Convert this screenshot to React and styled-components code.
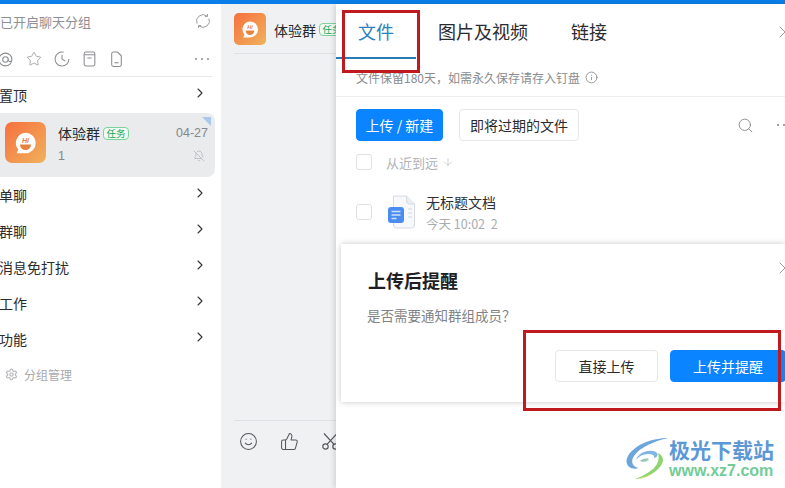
import React from 'react';
import styled, { createGlobalStyle } from 'styled-components';
import { ChevronRight, Star, Search, Info, ArrowDown, Smile, ThumbsUp, X, BellOff, Settings } from 'lucide-react';

const Global = createGlobalStyle`
  html, body { margin: 0; padding: 0; height: 100%; background: #fff; overflow: hidden; }
  * { box-sizing: border-box; }
  body { font-family: "Noto Sans CJK SC", "Noto Sans", sans-serif; color: #222; }
`;

const Page = styled.div`
  position: relative;
  width: 785px;
  height: 488px;
  overflow: hidden;
  display: flex;
  flex-direction: column;
`;
const TopBar = styled.div`
  height: 4px;
  flex: none;
  background: #0a7ee8;
`;
const Body = styled.div`
  flex: 1;
  display: flex;
  min-height: 0;
`;

/* left column */
const Sidebar = styled.aside`
  width: 221px;
  flex: none;
  background: #fff;
  display: flex;
  flex-direction: column;
`;
const SearchRow = styled.div`
  height: 36px;
  padding: 0 10px 2px 0;
  display: flex;
  align-items: center;
  justify-content: space-between;
  font-size: 13px;
  color: #8d8f94;
`;
const ToolRow = styled.div`
  height: 37px;
  margin-right: 9px;
  display: flex;
  align-items: center;
  border-bottom: 1px solid #e7e8ea;
  padding-top: 2px;
  gap: 12px;
  color: #8b8d91;
  svg { flex: none; }
`;
const Dots = styled.span`
  margin-left: auto;
  display: flex;
  gap: 4px;
  margin-right: 3px;
  i { width: 2px; height: 2px; border-radius: 50%; background: ${p => p.$color || '#8b8d91'}; }
`;
const Group = styled.div`
  height: 36px;
  padding: 0 14px 1px 0;
  display: flex;
  align-items: center;
  justify-content: space-between;
  font-size: 14px;
  color: #2a2b2e;
  span { margin-left: -1px; }
  svg { margin-top: -3px; margin-right: -1px; color: #333; }
`;
const ChatCard = styled.div`
  position: relative;
  width: 215px;
  height: 64px;
  border-radius: 0 8px 8px 0;
  background: #e9ebed;
  padding: 9px 7px 0 5px;
  display: flex;
  gap: 12px;
  overflow: hidden;
`;
const Corner = styled.div`
  position: absolute;
  top: 4px;
  right: 4px;
  width: 0;
  height: 0;
  border-top: 9px solid #a9c8ea;
  border-left: 9px solid transparent;
`;
const CardMain = styled.div`
  flex: 1;
  display: flex;
  flex-direction: column;
`;
const CardLine = styled.div`
  display: flex;
  align-items: center;
  height: ${p => p.$h}px;
`;
const Name = styled.span`
  font-size: 14px;
  color: #26282b;
  white-space: nowrap;
`;
const Tag = styled.span`
  flex: none;
  margin-left: 3px;
  height: 13px;
  width: 26px;
  border: 1px solid #7dd3a0;
  background: #eefaf2;
  border-radius: 4px;
  color: #22a45a;
  font-size: 9.5px;
  line-height: 11px;
  text-align: center;
`;
const Time = styled.span`
  margin-left: auto;
  font-family: "Liberation Sans", sans-serif;
  font-size: 12.5px;
  color: #85878b;
`;
const Count = styled.span`
  font-family: "Liberation Sans", sans-serif;
  font-size: 12.5px;
  color: #85878b;
`;
const Manage = styled.div`
  height: 34px;
  padding-left: 5px;
  display: flex;
  align-items: center;
  gap: 6px;
  font-size: 12px;
  color: #a8aaad;
`;

/* middle column */
const Chat = styled.section`
  width: 115px;
  flex: none;
  background: #f0f1f3;
  display: flex;
  flex-direction: column;
  overflow: hidden;
  padding-left: 13px;
`;
const ChatHead = styled.header`
  height: 50px;
  flex: none;
  padding-top: 9px;
  border-bottom: 1px solid #dfe1e4;
  display: flex;
  gap: 8px;
  white-space: nowrap;
`;
const ChatHeadTitle = styled.div`
  height: 33px;
  display: flex;
  align-items: center;
`;
const ChatGap = styled.div`
  flex: 1;
`;
const ChatTools = styled.div`
  height: 68px;
  flex: none;
  border-top: 1px solid #dfe1e4;
  padding: 11px 0 0 5px;
  display: flex;
  gap: 22px;
  color: #55575b;
  svg { flex: none; }
`;

/* right column */
const Panel = styled.section`
  flex: 1;
  min-width: 0;
  background: #fff;
  box-shadow: -2px 0 5px rgba(0, 0, 0, 0.12);
  position: relative;
  display: flex;
  flex-direction: column;
`;
const Tabs = styled.nav`
  height: 55px;
  flex: none;
  display: flex;
  position: relative;
`;
const Tab = styled.div`
  width: ${p => p.$w}px;
  height: 55px;
  text-align: center;
  font-size: 18px;
  line-height: 55px;
  color: ${p => (p.$active ? '#2b82bd' : '#2b2c2f')};
  border-bottom: 2px solid ${p => (p.$active ? '#2a7ab5' : 'transparent')};
`;
const CloseSlot = styled.div`
  position: absolute;
  right: -10px;
  top: ${p => p.$top}px;
  height: 20px;
  color: #8e9094;
`;
const Notice = styled.div`
  height: 38px;
  flex: none;
  padding-left: 20px;
  display: flex;
  align-items: center;
  gap: 5px;
  font-size: 12px;
  color: #8a8c90;
  border-bottom: 1px solid #eeeff1;
`;
const Actions = styled.div`
  height: 45px;
  flex: none;
  padding: 12px 0 0 20px;
  display: flex;
  gap: 16px;
`;
const Btn = styled.button`
  height: 32px;
  width: ${p => p.$w}px;
  flex: none;
  padding: 0;
  border-radius: 4px;
  font-family: inherit;
  font-size: 14px;
  border: 1px solid ${p => (p.$primary ? '#0a84ff' : '#e6e7e9')};
  background: ${p => (p.$primary ? '#0a84ff' : '#fff')};
  color: ${p => (p.$primary ? '#fff' : '#2a2b2e')};
`;
const ActionIcons = styled.div`
  margin-left: auto;
  margin-right: -9px;
  height: 32px;
  display: flex;
  align-items: center;
  gap: 23px;
  color: #7f8185;
`;
const Row = styled.div`
  padding-left: 20px;
  display: flex;
  align-items: center;
  height: ${p => p.$h}px;
  flex: none;
`;
const Check = styled.span`
  width: 16px;
  height: 16px;
  flex: none;
  border: 1px solid #e0e1e3;
  border-radius: 3px;
  background: #fff;
`;
const SortLabel = styled.span`
  margin-left: 14px;
  font-size: 13px;
  color: #b0b2b5;
  display: flex;
  align-items: center;
  gap: 4px;
`;
const FileMeta = styled.div`
  margin-left: 10px;
  display: flex;
  flex-direction: column;
  gap: 4px;
  margin-top: 2px;
`;
const FileName = styled.div`
  font-size: 14px;
  line-height: 17px;
  color: #2e2f32;
`;
const FileDate = styled.div`
  font-size: 12.5px;
  line-height: 17px;
  color: #a9abae;
`;
const DocSlot = styled.span`
  margin-left: 16px;
  display: flex;
`;

/* overlays */
const Dialog = styled.div`
  position: absolute;
  left: 5px;
  top: 240px;
  width: 444px;
  height: 158px;
  background: #fff;
  box-shadow: 0 0 6px rgba(0, 0, 0, 0.22);
  padding: 24px 0 0 27px;
`;
const DialogTitle = styled.h2`
  margin: 0;
  font-size: 18px;
  line-height: 24px;
  font-weight: 700;
  color: #1f2023;
`;
const DialogText = styled.p`
  margin: 13px 0 0 -1px;
  font-size: 13.5px;
  line-height: 20px;
  color: #818386;
`;
const DialogButtons = styled.div`
  margin: 25px 0 0 187px;
  display: flex;
  gap: 12px;
`;
const RedBox = styled.div`
  position: absolute;
  left: ${p => p.$x}px;
  top: ${p => p.$y}px;
  width: ${p => p.$w}px;
  height: ${p => p.$h}px;
  border: 3px solid #c01a1f;
`;
const Watermark = styled.div`
  position: absolute;
  left: 625px;
  top: 436px;
  display: flex;
  gap: 0;
  align-items: center;
`;
const MarkText = styled.div`
  display: flex;
  flex-direction: column;
`;
const MarkCn = styled.div`
  font-size: 21px;
  line-height: 26px;
  font-weight: 700;
  color: #5d98d6;
`;
const MarkEn = styled.div`
  font-family: "Liberation Sans", sans-serif;
  font-size: 16px;
  line-height: 18px;
  font-weight: 700;
  color: #72cc97;
`;

function HiAvatar({ size, radius }) {
  return (
    <svg width={size} height={size} viewBox="0 0 40 40" style={{ flex: 'none' }}>
      <defs>
        <linearGradient id={`hi${size}`} x1="0" y1="0" x2="1" y2="1">
          <stop offset="0" stopColor="#f7703f" />
          <stop offset="1" stopColor="#efb25c" />
        </linearGradient>
      </defs>
      <rect width="40" height="40" rx={radius} fill={`url(#hi${size})`} />
      <path d="M20 10.500a10 10 0 0 1 0 20h-8.600l1.600-3.600a10 10 0 0 1 7-16.400z" fill="#fff" />
      <path d="M14.600 22h10.800a5.400 5.400 0 0 1-10.800 0z" fill="#e8823f" />
      <text x="20" y="20" textAnchor="middle" fontFamily="Liberation Sans, sans-serif" fontSize="7" fontWeight="700" fontStyle="italic" fill="#e8823f">Hi</text>
    </svg>
  );
}

function Doc() {
  return (
    <svg width="28" height="34" viewBox="0 0 28 34">
      <path d="M5.500 1h13l8 8v21a3 3 0 0 1-3 3h-15a3 3 0 0 1-3-3z" fill="#f6f8fb" stroke="#d6dbe3" />
      <path d="M18.500 1v5a3 3 0 0 0 3 3h5" fill="#eaeef3" stroke="#d6dbe3" />
      <path d="M20 14h4M20 18h4M20 22h4" stroke="#d3d8df" strokeWidth="1" />
      <rect x="0" y="12" width="16" height="16" rx="3" fill="#4a8cf0" />
      <path d="M3.500 16.500h9M3.500 20h9M3.500 23.500h5" stroke="#cfe0fb" strokeWidth="1.400" />
    </svg>
  );
}

const Lane = ({ label }) => (
  <Group>
    <span>{label}</span>
    <ChevronRight size={16} strokeWidth={1.6} />
  </Group>
);

export default function App() {
  return (
    <Page>
      <Global />
      <TopBar />
      <Body>
        <Sidebar>
          <SearchRow>
            已开启聊天分组
            <svg width="16" height="16" viewBox="0 0 16 16" fill="none" stroke="#9a9c9f" strokeWidth="1">
              <path d="M2 10.500A6.500 6.500 0 0 1 12 3M14 5.500A6.500 6.500 0 0 1 4 13" />
              <path d="M12.500 1v2.500H10M3.500 15v-2.500H6" />
            </svg>
          </SearchRow>
          <ToolRow>
            <svg width="16" height="15" viewBox="0 0 15 14" fill="none" stroke="currentColor" style={{ marginLeft: -2 }}>
              <circle cx="7" cy="7" r="6" />
              <circle cx="7" cy="7" r="2.600" />
              <path d="M9.600 7c0 2 2 2.400 3.400 1" />
            </svg>
            <Star size={16} strokeWidth={1.1} />
            <svg width="16" height="16" viewBox="0 0 15 15" fill="none" stroke="currentColor">
              <path d="M14 7.500A6.500 6.500 0 1 1 9 1.200M7.500 3.500v4l3 2" />
            </svg>
            <svg width="15" height="16" viewBox="0 0 14 15" fill="none" stroke="currentColor">
              <rect x="2" y="1" width="10" height="13" rx="1.500" />
              <path d="M2 3.500h10M5 6.500h4" />
            </svg>
            <svg width="15" height="16" viewBox="0 0 14 15" fill="none" stroke="currentColor">
              <path d="M2.500 2.500a1.500 1.500 0 0 1 1.500-1.500h4l3.500 3.500v8.500a1.500 1.500 0 0 1-1.500 1.500h-6a1.500 1.500 0 0 1-1.500-1.500z" />
              <path d="M5 11h4" />
            </svg>
            <Dots><i /><i /><i /></Dots>
          </ToolRow>
          <Lane label="置顶" />
          <ChatCard>
            <Corner />
            <HiAvatar size={41} radius={7} />
            <CardMain>
              <CardLine $h={22}>
                <Name>体验群</Name>
                <Tag>任务</Tag>
                <Time>04-27</Time>
              </CardLine>
              <CardLine $h={23}>
                <Count>1</Count>
                <BellOff size={12} strokeWidth={1.2} color="#a6a8ab" style={{ marginLeft: 'auto', marginRight: 3 }} />
              </CardLine>
            </CardMain>
          </ChatCard>
          <Lane label="单聊" />
          <Lane label="群聊" />
          <Lane label="消息免打扰" />
          <Lane label="工作" />
          <Lane label="功能" />
          <Manage>
            <Settings size={13} strokeWidth={2.4} color="#b9bbbe" />
            分组管理
          </Manage>
        </Sidebar>

        <Chat>
          <ChatHead>
            <HiAvatar size={32} radius={6} />
            <ChatHeadTitle>
              <Name>体验群</Name>
              <Tag>任务</Tag>
            </ChatHeadTitle>
          </ChatHead>
          <ChatGap />
          <ChatTools>
            <Smile size={19} strokeWidth={1.3} />
            <ThumbsUp size={19} strokeWidth={1.3} />
            <svg width="19" height="19" viewBox="0 0 19 19" fill="none" stroke="currentColor" strokeWidth="1.200">
              <circle cx="4.500" cy="14.500" r="2.700" />
              <circle cx="14.500" cy="14.500" r="2.700" />
              <path d="M6 12.300L16 1.500M13 12.300L3 1.500" />
            </svg>
          </ChatTools>
        </Chat>

        <Panel>
          <Tabs>
            <Tab $w={80} $active>文件</Tab>
            <Tab $w={134}>图片及视频</Tab>
            <Tab $w={78}>链接</Tab>
            <CloseSlot $top={18}><X size={20} strokeWidth={1.1} /></CloseSlot>
          </Tabs>
          <Notice>
            文件保留180天，如需永久保存请存入钉盘
            <Info size={13} strokeWidth={1.3} color="#6f7175" />
          </Notice>
          <Actions>
            <Btn $primary $w={87}>上传 / 新建</Btn>
            <Btn $w={120}>即将过期的文件</Btn>
            <ActionIcons>
              <Search size={17} strokeWidth={1.2} />
              <Dots $color="#7f8185"><i /><i /><i /></Dots>
            </ActionIcons>
          </Actions>
          <Row $h={40}>
            <Check />
            <SortLabel>从近到远 <ArrowDown size={12} strokeWidth={1.2} /></SortLabel>
          </Row>
          <Row $h={60}>
            <Check />
            <DocSlot><Doc /></DocSlot>
            <FileMeta>
              <FileName>无标题文档</FileName>
              <FileDate>今天 10:02&nbsp;&nbsp;2</FileDate>
            </FileMeta>
          </Row>
          <Dialog>
            <CloseSlot $top={14}><X size={20} strokeWidth={1.1} /></CloseSlot>
            <DialogTitle>上传后提醒</DialogTitle>
            <DialogText>是否需要通知群组成员？</DialogText>
            <DialogButtons>
              <Btn $w={103}>直接上传</Btn>
              <Btn $primary $w={116}>上传并提醒</Btn>
            </DialogButtons>
          </Dialog>
        </Panel>
      </Body>

      <RedBox $x={342} $y={10} $w={78} $h={63} />
      <RedBox $x={523} $y={330} $w={258} $h={81} />
      <Watermark>
        <svg width="44" height="44" viewBox="0 0 44 44">
          <path d="M43 2C28 2 10 8 3 20c-5 9 3 15 11 12-6-1-9-6-5-12C15 11 30 5 43 2z" fill="#6ea6dc" />
          <path d="M11 24c2-6 9-10 17-9 6 1 6 6 1 7 1-3-2-4-6-4-5 0-9 2-12 6z" fill="#7fb6e4" />
          <path d="M15 25c2-2 6-3 9-2-2 2-4 4-9 2z" fill="#8ec9b4" />
          <path d="M33 17c6 3 7 9 1 15-6 7-18 11-24 11 8-3 18-8 22-15 2-4 2-8 1-11z" fill="#8ed46f" />
          <path d="M10 43c8-1 15-3 21-8-5 5-12 8-21 8z" fill="#e6dc6a" />
        </svg>
        <MarkText>
          <MarkCn>极光下载站</MarkCn>
          <MarkEn>www.xz7.com</MarkEn>
        </MarkText>
      </Watermark>
    </Page>
  );
}
